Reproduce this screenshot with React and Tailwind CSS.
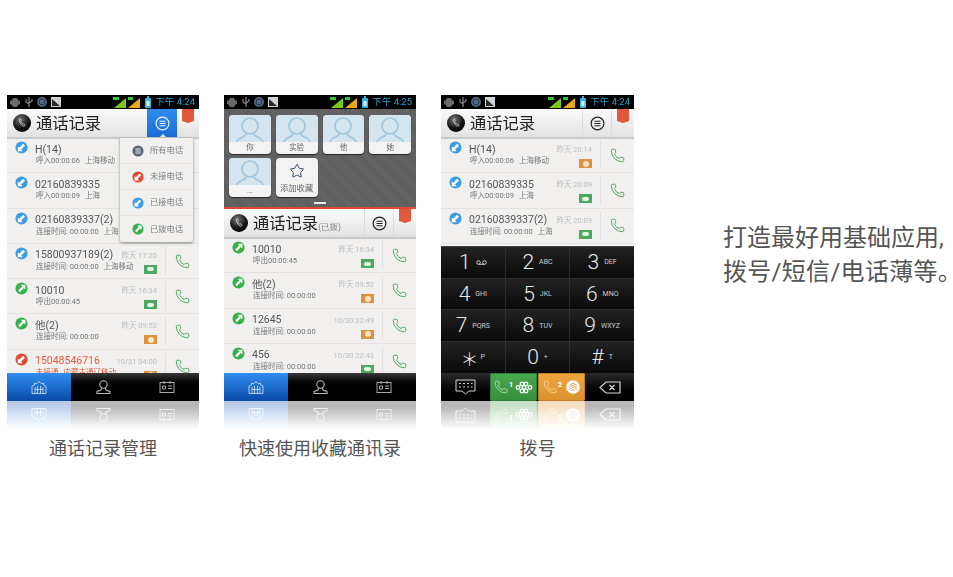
// App.jsx — phone dialer feature showcase
import { Phone, Star } from 'lucide-react'

const CJK = 'font-["Roboto","Noto_Sans_CJK_SC",sans-serif]'

const INCOMING = [
  { kind: 'in', title: 'H(14)', sub: ['呼入00:00:06', '上海移动'], time: '昨天 20:14', tag: 'orange' },
  { kind: 'in', title: '02160839335', sub: ['呼入00:00:09', '上海'], time: '昨天 20:09', tag: 'green' },
  { kind: 'in', title: '02160839337(2)', sub: ['连接时间: 00:00:00', '上海'], time: '昨天 20:09', tag: 'green' },
]

const ALL_CALLS = [
  ...INCOMING,
  { kind: 'in', title: '15800937189(2)', sub: ['连接时间: 00:00:00', '上海移动'], time: '昨天 17:20', tag: 'green' },
  { kind: 'out', title: '10010', sub: ['呼出00:00:45'], time: '昨天 16:34', tag: 'green' },
  { kind: 'out', title: '他(2)', sub: ['连接时间: 00:00:00'], time: '昨天 09:52', tag: 'orange' },
  { kind: 'miss', title: '15048546716', sub: ['未接通', '内蒙古通辽移动'], time: '10/31 04:00', tag: 'orange' },
]

const OUTGOING = [
  { kind: 'out', title: '10010', sub: ['呼出00:00:45'], time: '昨天 16:34', tag: 'green' },
  { kind: 'out', title: '他(2)', sub: ['连接时间: 00:00:00'], time: '昨天 09:52', tag: 'orange' },
  { kind: 'out', title: '12645', sub: ['连接时间: 00:00:00'], time: '10/30 22:49', tag: 'orange' },
  { kind: 'out', title: '456', sub: ['连接时间: 00:00:00'], time: '10/30 22:43', tag: 'green' },
]

const KEYS = [
  ['1', ''], ['2', 'ABC'], ['3', 'DEF'],
  ['4', 'GHI'], ['5', 'JKL'], ['6', 'MNO'],
  ['7', 'PQRS'], ['8', 'TUV'], ['9', 'WXYZ'],
  ['＊', 'P'], ['0', '+'], ['#', 'T'],
]

const MENU = [
  { kind: 'all', label: '所有电话' },
  { kind: 'miss', label: '未接电话' },
  { kind: 'in', label: '已接电话' },
  { kind: 'out', label: '已拨电话' },
]

function CallBadge({ kind, size = 13 }) {
  const fill = { in: '#3a9be6', out: '#35b04a', miss: '#e0492f', all: '#5d6675' }[kind]
  return (
    <svg width={size} height={size} viewBox="0 0 14 14" className="shrink-0">
      <circle cx="7" cy="7" r="6.5" fill={fill} />
      {kind === 'all' && <path d="M4 4.6h6M4 7h6M4 9.4h6" stroke="#e8e8e8" strokeWidth="1.3" />}
      {kind === 'out' && <path d="M3.500 9 8 4.800 6 3H11.200V8.200L9.500 6.500 5.200 11Z" fill="#fff" />}
      {(kind === 'in' || kind === 'miss') && <path d="M10.800 5 6.500 9.200 8.300 11H3V5.800L4.600 7.400 8.800 3Z" fill="#fff" />}
    </svg>
  )
}

function SimTag({ color }) {
  const bg = color === 'green' ? 'bg-[#4fa860]' : 'bg-[#dc9340]'
  return (
    <span className={`flex h-[9px] w-[13px] items-center justify-center ${bg}`}>
      {color === 'green'
        ? <span className="h-[4px] w-[7px] rounded-[2px] bg-[#e6f3e8]" />
        : <span className="h-[6px] w-[6px] rounded-full bg-[#f8e3c8]" />}
    </span>
  )
}

function StatusBar({ time }) {
  return (
    <div className="flex h-[14px] shrink-0 items-center bg-black pl-[3px] pr-[4px]">
      <svg width="52" height="12" viewBox="0 0 52 12">
        <path d="M3 2h4l1 2 2 1v3l-2 1-1 2H3L2 9 0 8V5l2-1Z" fill="#6a6a6a" />
        <path d="M19 1v10M16 3v3l3 2M22 3v2l-3 2" stroke="#8a8a8a" strokeWidth="1.2" fill="none" />
        <circle cx="32" cy="6" r="5" fill="#4e6a86" />
        <circle cx="32" cy="6" r="3" fill="none" stroke="#23303c" />
        <rect x="41" y="1" width="10" height="10" fill="#d0d4d6" />
        <path d="M42 3l8 7h-8Z" fill="#2a2a2a" />
      </svg>
      <div className="ml-auto flex items-center gap-[2px]">
        <svg width="28" height="12" viewBox="0 0 28 12">
          <path d="M1 12 13 2v10Z" fill="#78c818" />
          <path d="M15 12 27 2v10Z" fill="#e8a818" />
          <path d="M0 2.500h6M15 2.500h5" stroke="#2fc83a" strokeWidth="3" />
        </svg>
        <svg width="6" height="12" viewBox="0 0 6 12" className="mx-[2px]">
          <rect x="0" y="2" width="6" height="10" rx="1" fill="#38b4e0" />
          <rect x="2" y="0" width="2" height="2" fill="#38b4e0" />
          <rect x="1.5" y="5" width="3" height="5" fill="#d8f0fa" />
        </svg>
        <span className={`${CJK} whitespace-nowrap text-[9.5px] leading-[14px] text-[#2f9ccc]`}>{time}</span>
      </div>
    </div>
  )
}

function MenuIcon({ active }) {
  return (
    <svg width="15" height="15" viewBox="0 0 16 16">
      <circle cx="8" cy="8" r="6.8" fill="none" stroke={active ? '#e6f1fc' : '#222'} strokeWidth="1.3" />
      <path d="M4.8 5.600h6.400M4.800 8h6.400M4.800 10.400h6.400" stroke={active ? '#e6f1fc' : '#222'} strokeWidth="1.3" />
    </svg>
  )
}

function Header({ active, suffix, id }) {
  return (
    <div className="relative flex h-[30px] shrink-0 items-center border-b-2 border-[#c9c9c9] bg-gradient-to-b from-[#fbfbfb] to-[#e2e2e2]">
      <svg width="18" height="18" viewBox="0 0 18 18" className="ml-[6px] shrink-0">
        <defs>
          <radialGradient id={id} cx="0.4" cy="0.3" r="0.8">
            <stop offset="0" stopColor="#777" />
            <stop offset="0.6" stopColor="#151515" />
            <stop offset="1" stopColor="#000" />
          </radialGradient>
        </defs>
        <circle cx="9" cy="9" r="9" fill={`url(#${id})`} />
        <path d="M6 5.500l1.400-.8 1 2-.9.800 2.200 2.800 1-.6 1.500 1.600-1.300 1C9 12 6.500 9 6 5.500Z" fill="none" stroke="#ccc" strokeWidth="0.8" />
      </svg>
      <span className={`${CJK} ml-[5px] mt-[2px] whitespace-nowrap text-[16.3px] leading-[28px] text-[#222]`}>通话记录</span>
      {suffix && <span className={`${CJK} mt-[9px] text-[8.5px] text-[#888]`}>{suffix}</span>}
      <div className={`relative ml-auto flex h-full w-[30px] items-center justify-center border-x ${active ? 'border-transparent bg-gradient-to-b from-[#2f8cec] to-[#1c6cd8]' : 'border-[#dcdcdc]'}`}>
        <MenuIcon active={active} />
        {active && <span className="absolute bottom-0 left-[12px] h-[3px] w-[6px] bg-[#f1f0ef] [clip-path:polygon(50%_0,100%_100%,0_100%)]" />}
      </div>
      <div className="flex h-full w-[22px] justify-start pl-[5px]">
        <span className="h-[14px] w-[12px] bg-[#e0583e] [clip-path:polygon(0_0,100%_0,100%_85%,50%_100%,0_85%)]" />
      </div>
    </div>
  )
}

function CallRow({ call }) {
  const missed = call.kind === 'miss'
  return (
    <div className="flex h-[35.3px] shrink-0 border-b border-[#e3e2e1] bg-[#f1f0ef]">
      <div className="w-[28px] shrink-0 pl-[8px] pt-[3px]">
        <CallBadge kind={call.kind} />
      </div>
      <div className={`${CJK} min-w-0 flex-1 pt-[4.5px]`}>
        <p className={`whitespace-nowrap text-[10.5px] leading-[14px] ${missed ? 'text-[#e2593f]' : 'text-[#555]'}`}>{call.title}</p>
        <p className={`-mt-[0.5px] flex gap-[5px] whitespace-nowrap pl-[1px] text-[7.5px] leading-[10px] ${missed ? 'text-[#e2593f]' : 'text-[#777]'}`}>
          {call.sub.map(s => <span key={s}>{s}</span>)}
        </p>
      </div>
      <div className={`${CJK} flex shrink-0 flex-col items-end pr-[8px] pt-[7px] text-[7.5px] leading-[10px] text-[#bdbdbd]`}>
        <span className="whitespace-nowrap">{call.time}</span>
        <span className="mt-[4px]"><SimTag color={call.tag} /></span>
      </div>
      <div className="my-[3px] flex w-[34px] shrink-0 items-center justify-center border-l border-[#e0e0e0]">
        <Phone size={15} strokeWidth={1.5} className="text-[#46a656]" />
      </div>
    </div>
  )
}

function TabBar() {
  return (
    <div className="flex h-[28px] shrink-0">
      <div className="flex w-[64px] items-center justify-center bg-gradient-to-b from-[#2f8ef0] to-[#0b4aa8]">
        <svg width="16" height="13" viewBox="0 0 16 13" fill="none" stroke="#d8e8fa" strokeWidth="0.8">
          <path d="M1 12.500V5l2.500-1V2l1.500 1 3-2.500L11 3l1.500-1v2L15 5v7.500ZM4 12.500V6M6.500 12.500V5M9.500 12.500V5M12 12.500V6M4 8.500h8" />
        </svg>
      </div>
      <div className="flex flex-1 items-center justify-center bg-gradient-to-b from-[#3a3a3a] via-black to-black">
        <svg width="15" height="14" viewBox="0 0 15 14" fill="none" stroke="#b8b8b8" strokeWidth="1.1">
          <circle cx="7.500" cy="4.500" r="3.700" />
          <path d="M5.500 8 5 10 1 11.500V13.500H14V11.500L10 10 9.500 8" />
        </svg>
      </div>
      <div className="flex w-[64px] items-center justify-center bg-gradient-to-b from-[#3a3a3a] via-black to-black">
        <svg width="16" height="12" viewBox="0 0 16 12" fill="none" stroke="#a8a8a8" strokeWidth="1">
          <rect x="1" y="1.500" width="14" height="10" />
          <path d="M5 0v3M11 0v3M3.500 5h3v3h-3ZM9 5h4M9 7.500h4" />
        </svg>
      </div>
    </div>
  )
}

function FilterMenu() {
  return (
    <div className="absolute left-[113px] top-[43px] w-[73px] rounded-b-[2px] bg-[#f1f0ef] shadow-[0_1px_3px_rgba(0,0,0,0.45)]">
      {MENU.map((m, i) => (
        <div key={m.kind} className={`flex h-[26px] items-center gap-[6px] pl-[12px] ${i < 3 ? 'border-b border-[#e4e3e2]' : ''}`}>
          <CallBadge kind={m.kind} size={12} />
          <span className={`${CJK} whitespace-nowrap text-[8.3px] text-[#808080]`}>{m.label}</span>
        </div>
      ))}
    </div>
  )
}

function Favorites() {
  const names = ['你', '实验', '他', '她', '...']
  return (
    <div className="relative h-[100px] shrink-0 border-b-2 border-[#e0482c] bg-[repeating-linear-gradient(45deg,#5c5c5c_0,#5c5c5c_1px,#666_1px,#666_2px)] px-[5px] pt-[6px]">
      <div className="grid grid-cols-4 gap-x-[5px] gap-y-[4px]">
        {names.map(n => (
          <div key={n} className="flex h-[39px] flex-col overflow-hidden rounded-[4px] bg-[#f3f3f3] shadow-[0_1px_1px_rgba(0,0,0,0.6)]">
            <div className="flex h-[27px] items-end justify-center overflow-hidden bg-[#d4e5f0]">
              <svg width="30" height="26" viewBox="0 0 30 26" fill="none" stroke="#a3c6dd" strokeWidth="1.7">
                <circle cx="15" cy="10" r="8" />
                <path d="M11 18c0 3-7 3-9.500 8M19 18c0 3 7 3 9.500 8" />
              </svg>
            </div>
            <span className={`${CJK} text-center text-[7.5px] leading-[12px] text-[#666]`}>{n}</span>
          </div>
        ))}
        <div className="flex h-[39px] flex-col items-center rounded-[4px] bg-[#f3f3f3] pt-[5px] shadow-[0_1px_1px_rgba(0,0,0,0.6)]">
          <Star size={16} strokeWidth={1.5} className="text-[#2d4a66]" />
          <span className={`${CJK} mt-[3px] whitespace-nowrap text-[8.3px] leading-[12px] text-[#666]`}>添加收藏</span>
        </div>
      </div>
      <span className="absolute bottom-[3px] left-[90px] h-[2px] w-[12px] bg-[#eee]" />
    </div>
  )
}

function Keypad() {
  return (
    <div className="grid flex-1 grid-cols-3 grid-rows-4 gap-[1px] border-t border-[#444] bg-[#2c2c2c]">
      {KEYS.map(([digit, label]) => (
        <div key={digit} className="flex items-center justify-center gap-[5px] bg-gradient-to-b from-[#222] to-[#0a0a0a]">
          {digit === '＊'
            ? <span className="-mr-[3px] font-['Noto_Sans_CJK_SC',sans-serif] text-[18px] font-light leading-none text-[#e8e8e8]">{digit}</span>
            : <span className="font-['Roboto',sans-serif] text-[21px] font-light leading-none text-[#e8e8e8]">{digit}</span>}
          {label
            ? <span className="font-['Roboto',sans-serif] text-[7px] text-[#ccc]">{label}</span>
            : (
              <svg width="11" height="5" viewBox="0 0 11 5" fill="none" stroke="#ccc" strokeWidth="1">
                <circle cx="2.500" cy="2.500" r="1.800" />
                <circle cx="8.500" cy="2.500" r="1.800" />
                <path d="M2.500 4.300h6" />
              </svg>
            )}
        </div>
      ))}
    </div>
  )
}

function DialBar() {
  return (
    <div className="flex h-[28px] shrink-0 bg-gradient-to-b from-[#2a2a2a] to-black">
      <div className="flex w-[49px] items-center justify-center">
        <svg width="21" height="16" viewBox="0 0 21 16" fill="none" stroke="#d0d0d0" strokeWidth="1">
          <path d="M1 1h19v11h-6l-3.500 3L7 12H1ZM4 4.500h2M8 4.500h2M12 4.500h2M16 4.500h1.500M4 8h2M8 8h2M12 8h2M16 8h1.500" />
        </svg>
      </div>
      <div className={`${CJK} flex w-[47px] items-center justify-center gap-[1px] rounded-[1px] border border-[#2f7f34] bg-gradient-to-b from-[#4aa84e] to-[#37903c]`}>
        <Phone size={14} strokeWidth={1.2} className="text-[#cfe8d0]" />
        <span className="-mt-[5px] text-[8px] font-bold leading-none text-white">1</span>
        <svg width="18" height="13" viewBox="0 0 18 13" fill="none" stroke="#fff" strokeWidth="1.300" className="ml-[1px]">
          <circle cx="3" cy="6.500" r="1.800" /><circle cx="15" cy="6.500" r="1.800" />
          <circle cx="7" cy="3" r="1.800" /><circle cx="11" cy="3" r="1.800" />
          <circle cx="7" cy="10" r="1.800" /><circle cx="11" cy="10" r="1.800" />
          <circle cx="9" cy="6.500" r="1.800" />
        </svg>
      </div>
      <div className={`${CJK} ml-[1px] flex w-[47px] items-center justify-center gap-[1px] rounded-[1px] border border-[#c27e20] bg-gradient-to-b from-[#eca640] to-[#dc922c]`}>
        <Phone size={14} strokeWidth={1.2} className="text-[#fae4c0]" />
        <span className="-mt-[5px] text-[8px] font-bold leading-none text-white">2</span>
        <svg width="14" height="14" viewBox="0 0 14 14" className="ml-[3px]">
          <circle cx="7" cy="7" r="6.800" fill="#fff" />
          <path d="M3 5.500l4-2.500 4 2.500M3 7.500 7 5l4 2.500M3 9.500 7 7l4 2.500M5 11l2-1.500L9 11" stroke="#e3a24a" strokeWidth="0.9" fill="none" />
        </svg>
      </div>
      <div className="flex flex-1 items-center justify-center">
        <svg width="22" height="13" viewBox="0 0 22 13" fill="none" stroke="#d8d8d8" strokeWidth="1.2">
          <path d="M7 1h14v11H7L1 6.500ZM10.500 4l5 5M15.500 4l-5 5" />
        </svg>
      </div>
    </div>
  )
}

function Reflection({ children }) {
  return (
    <div className="h-[29px] overflow-hidden opacity-[0.28] [mask-image:linear-gradient(to_bottom,#000_20%,transparent)]">
      <div className="-scale-y-100">{children}</div>
    </div>
  )
}

function Showcase({ caption, footer, width = 'w-[192px]', children }) {
  return (
    <div className={`${width} shrink-0`}>
      <div className="flex h-[306px] flex-col overflow-hidden blur-[0.35px]">
        {children}
        {footer}
      </div>
      <Reflection>{footer}</Reflection>
      <p className={`${CJK} mt-[7px] whitespace-nowrap text-center text-[18px] leading-[24px] text-[#555]`}>{caption}</p>
    </div>
  )
}

export default function App() {
  return (
    <div className="flex h-[577px] w-[953px] items-start gap-[25px] overflow-hidden bg-white pl-[7px] pt-[95px]">
      <Showcase caption="通话记录管理" footer={<TabBar />}>
        <div className="relative flex min-h-0 flex-1 flex-col">
          <StatusBar time="下午 4:24" />
          <Header active id="logo-a" />
          <div className="-mt-[1px] flex min-h-0 flex-1 flex-col overflow-hidden">
            {ALL_CALLS.map((c, i) => <CallRow key={i} call={c} />)}
          </div>
          <FilterMenu />
        </div>
      </Showcase>

      <Showcase caption="快速使用收藏通讯录" footer={<TabBar />}>
        <StatusBar time="下午 4:25" />
        <Favorites />
        <Header suffix="(已拨)" id="logo-b" />
        <div className="-mt-[1px] flex min-h-0 flex-1 flex-col overflow-hidden">
          {OUTGOING.map((c, i) => <CallRow key={i} call={c} />)}
        </div>
      </Showcase>

      <Showcase caption="拨号" width="w-[193px]" footer={<DialBar />}>
        <StatusBar time="下午 4:24" />
        <Header id="logo-c" />
        <div className="-mt-[1px] flex shrink-0 flex-col overflow-hidden bg-[#f1f0ef] pb-[2px]">
          {INCOMING.map((c, i) => <CallRow key={i} call={c} />)}
        </div>
        <Keypad />
      </Showcase>

      <div className={`${CJK} ml-[64px] mt-[126px] shrink-0 whitespace-nowrap text-[24px] leading-[34px] text-[#555]`}>
        <p>打造最好用基础应用,</p>
        <p className="tracking-[0.3px]">拨号/短信/电话薄等。</p>
      </div>
    </div>
  )
}
